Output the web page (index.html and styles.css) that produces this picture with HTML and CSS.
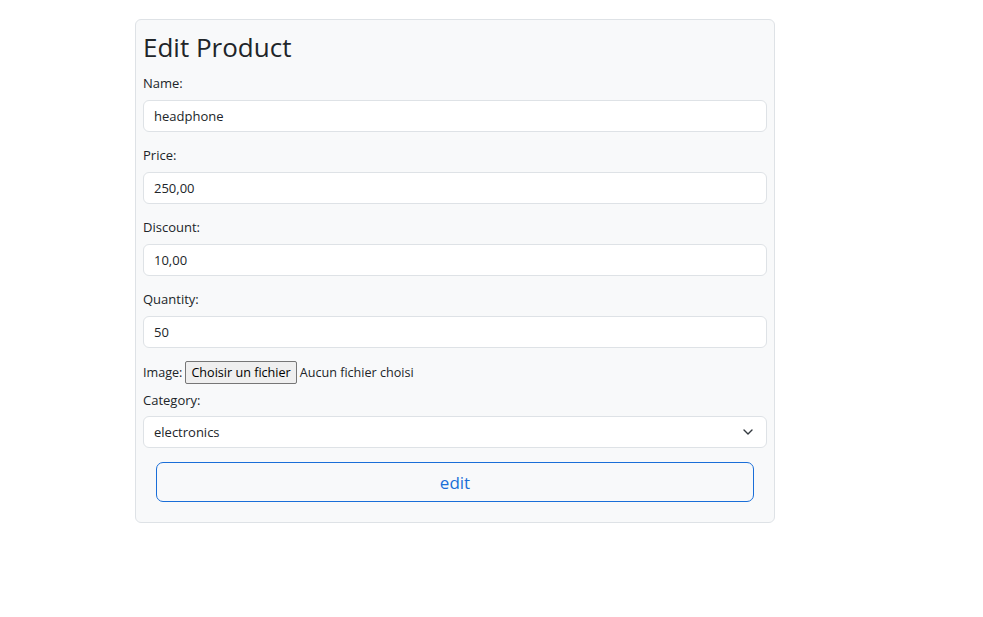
FILE: index.html
```html
<!DOCTYPE html>
<html lang="fr">
<head>
<meta charset="utf-8">
<title>Edit Product</title>
<link rel="stylesheet" href="styles.css">
</head>
<body>
<main class="page">
  <form class="card">
    <h2 class="title">Edit Product</h2>
    <label class="label">Name:</label>
    <div class="field">headphone</div>
    <label class="label">Price:</label>
    <div class="field">250,00</div>
    <label class="label">Discount:</label>
    <div class="field">10,00</div>
    <label class="label">Quantity:</label>
    <div class="field">50</div>
    <div class="file-row">
      <span>Image:</span>
      <span class="file-btn">Choisir un fichier</span>
      <span>Aucun fichier choisi</span>
    </div>
    <label class="label label-cat">Category:</label>
    <div class="field select">
      <span>electronics</span>
      <svg class="chev" width="10" height="6" viewBox="0 0 10 6"><path d="M1 1 L5 5 L9 1" fill="none" stroke="#343a40" stroke-width="1.4" stroke-linecap="round" stroke-linejoin="round"/></svg>
    </div>
    <div class="actions">
      <span class="btn">edit</span>
    </div>
  </form>
</main>
</body>
</html>
```
FILE: styles.css
```css
* { box-sizing: border-box; }
body {
  margin: 0;
  background: #fff;
  font-family: "Open Sans", "Noto Sans", sans-serif;
  color: #212529;
}
.page {
  padding: 19px 0 0 135px;
}
.card {
  width: 640px;
  background: #f8f9fa;
  border: 1px solid #dee2e6;
  border-radius: 6px;
  padding: 9px 7px 20px 7px;
  display: flex;
  flex-direction: column;
}
.title {
  margin: 0 0 7px 0;
  font-size: 26px;
  font-weight: 400;
  line-height: 36px;
}
.label {
  font-size: 13px;
  line-height: 22px;
  height: 22px;
  margin-bottom: 6px;
}
.label-cat { margin-bottom: 5px; }
.field {
  height: 32px;
  background: #fff;
  border: 1px solid #dee2e6;
  border-radius: 6px;
  padding: 0 10px;
  font-size: 13px;
  display: flex;
  align-items: center;
  margin-bottom: 12px;
}
.select {
  justify-content: space-between;
  margin-bottom: 14px;
}
.chev { margin-right: 3px; }
.file-row {
  height: 25px;
  margin-bottom: 4px;
  display: flex;
  align-items: center;
  gap: 3px;
  font-size: 12.6px;
}
.file-btn {
  height: 23px;
  display: flex;
  align-items: center;
  padding: 0 5px;
  background: #efefef;
  border: 1px solid #767676;
  border-radius: 2px;
  color: #000;
}
.actions {
  padding: 0 13px;
}
.btn {
  height: 40px;
  border: 1px solid #1a6ed8;
  border-radius: 7px;
  color: #1a6ed8;
  font-size: 17px;
  display: flex;
  align-items: center;
  justify-content: center;
}
```
